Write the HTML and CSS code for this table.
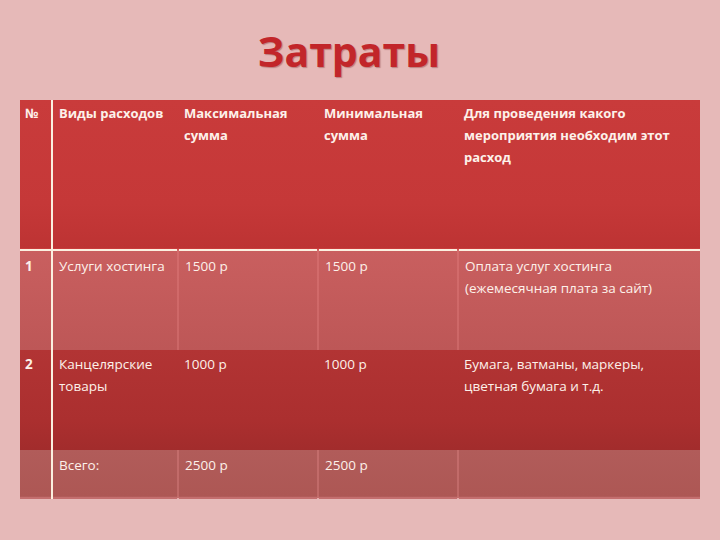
FILE: index.html
```html
<!DOCTYPE html>
<html lang="ru">
<head>
<meta charset="utf-8">
<title>Затраты</title>
<link rel="stylesheet" href="styles.css">
</head>
<body>
<div class="slide">
  <h1 class="title">Затраты</h1>
  <table class="costs">
    <colgroup>
      <col class="c-num"><col class="c-type"><col class="c-max"><col class="c-min"><col class="c-why">
    </colgroup>
    <thead>
      <tr class="head">
        <th class="first">№</th>
        <th>Виды расходов</th>
        <th>Максимальная сумма</th>
        <th>Минимальная сумма</th>
        <th class="last">Для проведения какого мероприятия необходим этот расход</th>
      </tr>
    </thead>
    <tbody>
      <tr class="band-light">
        <td class="first">1</td>
        <td>Услуги хостинга</td>
        <td>1500 р</td>
        <td>1500 р</td>
        <td class="last">Оплата услуг хостинга (ежемесячная плата за сайт)</td>
      </tr>
      <tr class="band-dark">
        <td class="first">2</td>
        <td>Канцелярские товары</td>
        <td>1000 р</td>
        <td>1000 р</td>
        <td class="last">Бумага, ватманы, маркеры, цветная бумага и т.д.</td>
      </tr>
      <tr class="band-total">
        <td class="first"></td>
        <td>Всего:</td>
        <td>2500 р</td>
        <td>2500 р</td>
        <td class="last"></td>
      </tr>
    </tbody>
  </table>
</div>
</body>
</html>
```

FILE: styles.css
```css
html, body {
  margin: 0;
  padding: 0;
  background: #e6b9b8;
}

.slide {
  width: 720px;
  height: 540px;
  background: #e6b9b8;
  font-family: "Open Sans", "Noto Sans", sans-serif;
  padding: 0 20px;
  box-sizing: border-box;
}

.title {
  margin: 0;
  padding: 26px 22px 0 0;
  height: 76px;
  box-sizing: border-box;
  text-align: center;
  font-size: 41px;
  line-height: 50px;
  font-weight: 700;
  color: #c2262a;
  text-shadow: 1px 1px 1px rgba(110, 20, 20, 0.35);
}

.costs {
  width: 680px;
  border-collapse: collapse;
  table-layout: fixed;
  margin-top: 24px;
  color: #fdf1ea;
  font-size: 13px;
  line-height: 22px;
}

.c-num { width: 32px; }
.c-type { width: 126px; }
.c-max { width: 140px; }
.c-min { width: 140px; }
.c-why { width: 242px; }

.costs th,
.costs td {
  vertical-align: top;
  text-align: left;
  padding: 2px 6px 0 6px;
  border: 0;
}

.costs th {
  font-weight: 700;
}

.costs tbody td {
  font-size: 13.5px;
  font-weight: 400;
}

.costs td.last {
  padding-right: 30px;
}

.costs td.first,
.costs th.first {
  font-weight: 700;
  padding-left: 5px;
  border-right: 2px solid #fbf0e0;
}

.head {
  height: 150px;
  background: linear-gradient(#c93b3b, #c53838 70%, #bd3333);
  border-bottom: 2px solid #fbf0e0;
}

.band-light {
  height: 100px;
  background: linear-gradient(#c95f5f, #c25a5a 60%, #bd5757);
}

.band-light td {
  padding-top: 4px;
  border-left: 2px solid rgba(240, 140, 140, 0.3);
}

.band-dark {
  height: 100px;
  background: linear-gradient(#b23434, #ab2f2f 70%, #a22c2c);
}

.band-dark td {
  padding-top: 3px;
}

.band-total {
  height: 48px;
  background: linear-gradient(#b15c5a, #ad5754);
  border-bottom: 2px solid #c46e6e;
}

.band-total td {
  padding-top: 4px;
  border-left: 2px solid rgba(240, 150, 150, 0.3);
}

.costs tbody td.first {
  border-left: 0;
  border-right: 2px solid #fbf0e0;
  font-weight: 700;
}

.costs td:nth-child(2) {
  border-left: 0;
}
```
